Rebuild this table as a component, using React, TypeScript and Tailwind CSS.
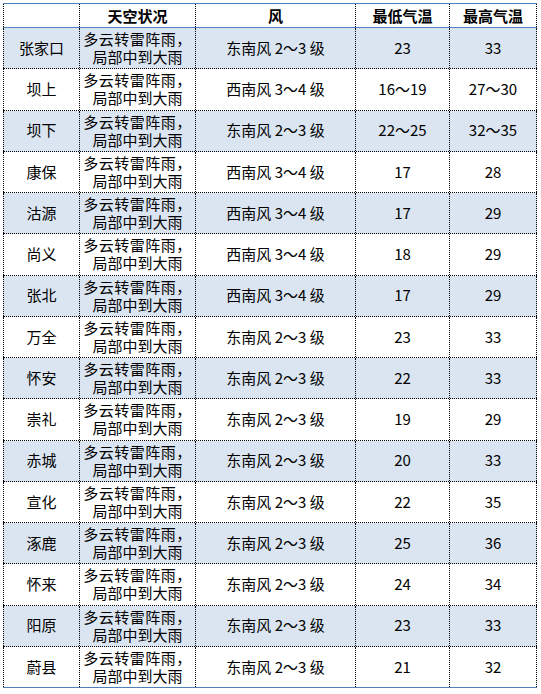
const rows = [
  { city: '张家口', wind: '东南风 2～3 级', low: '23', high: '33' },
  { city: '坝上', wind: '西南风 3～4 级', low: '16～19', high: '27～30' },
  { city: '坝下', wind: '东南风 2～3 级', low: '22～25', high: '32～35' },
  { city: '康保', wind: '西南风 3～4 级', low: '17', high: '28' },
  { city: '沽源', wind: '西南风 3～4 级', low: '17', high: '29' },
  { city: '尚义', wind: '西南风 3～4 级', low: '18', high: '29' },
  { city: '张北', wind: '西南风 3～4 级', low: '17', high: '29' },
  { city: '万全', wind: '东南风 2～3 级', low: '23', high: '33' },
  { city: '怀安', wind: '东南风 2～3 级', low: '22', high: '33' },
  { city: '崇礼', wind: '东南风 2～3 级', low: '19', high: '29' },
  { city: '赤城', wind: '东南风 2～3 级', low: '20', high: '33' },
  { city: '宣化', wind: '东南风 2～3 级', low: '22', high: '35' },
  { city: '涿鹿', wind: '东南风 2～3 级', low: '25', high: '36' },
  { city: '怀来', wind: '东南风 2～3 级', low: '24', high: '34' },
  { city: '阳原', wind: '东南风 2～3 级', low: '23', high: '33' },
  { city: '蔚县', wind: '东南风 2～3 级', low: '21', high: '32' },
]

const cell = 'flex h-full items-center justify-center border-l border-dotted border-black text-center'

export default function App() {
  return (
    <div className="h-[694px] w-[541px] bg-white pl-[3px] pt-[3px] font-['Noto_Sans_CJK_SC','Noto_Sans',sans-serif] text-[15px] text-black">
      <div className="w-[534px] border-t border-[#4f81bd]">
        <div className="flex h-[24px] border-b border-[#4f81bd] font-bold leading-none">
          <div className={`${cell} w-[76px]`} />
          <div className={`${cell} w-[116px]`}>天空状况</div>
          <div className={`${cell} w-[160px]`}>风</div>
          <div className={`${cell} w-[94px]`}>最低气温</div>
          <div className={`${cell} w-[88px] border-r`}>最高气温</div>
        </div>
        {rows.map((row, i) => (
          <div
            key={row.city}
            className={`flex h-[41.25px] border-b ${
              i === rows.length - 1 ? 'border-solid border-[#4f81bd]' : 'border-dotted border-black'
            } ${i % 2 === 0 ? 'bg-[#dbe5f1]' : 'bg-white'}`}
          >
            <div className={`${cell} w-[76px]`}>{row.city}</div>
            <div className={`${cell} w-[116px] flex-col leading-[18px]`}>
              <span className="tracking-[0.5px]">多云转雷阵雨，</span>
              <span>局部中到大雨</span>
            </div>
            <div className={`${cell} w-[160px]`}>{row.wind}</div>
            <div className={`${cell} w-[94px]`}>{row.low}</div>
            <div className={`${cell} w-[88px] border-r`}>{row.high}</div>
          </div>
        ))}
      </div>
    </div>
  )
}
